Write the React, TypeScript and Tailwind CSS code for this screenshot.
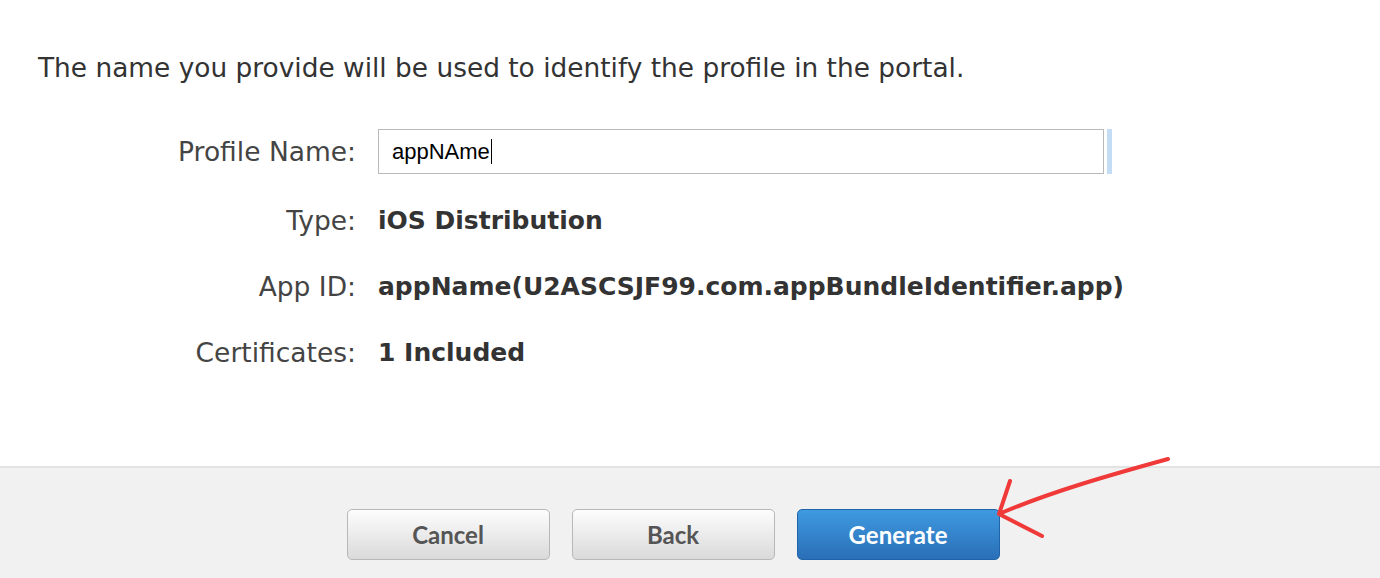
import React from 'react'

const rows = [
  { label: 'Type:', value: 'iOS Distribution' },
  { label: 'App ID:', value: 'appName(U2ASCSJF99.com.appBundleIdentifier.app)' },
  { label: 'Certificates:', value: '1 Included' },
]

function Button({ label, primary }: { label: string; primary?: boolean }) {
  return (
    <button
      className={
        primary
          ? 'w-[203px] h-[51px] rounded-[5px] border border-[#1f64a8] bg-gradient-to-b from-[#3f9ae0] to-[#2a6fb7] text-white text-[24px] font-bold'
          : 'w-[203px] h-[51px] rounded-[5px] border border-[#b8b8b8] bg-gradient-to-b from-[#fdfdfd] to-[#dadada] text-[#555] text-[24px] font-bold'
      }
      style={{ fontFamily: 'Lato, sans-serif' }}
    >
      {label}
    </button>
  )
}

export default function App() {
  return (
    <div className="w-[1380px] h-[578px] bg-white flex flex-col overflow-hidden relative" style={{ fontFamily: '"DejaVu Sans", sans-serif' }}>
      <div className="flex-1 flex flex-col">
        <p className="pl-[38px] pt-[52px] text-[26.4px] leading-[32px] text-[#333]">
          The name you provide will be used to identify the profile in the portal.
        </p>

        <div className="mt-[45px] grid grid-cols-[318px_auto] gap-x-[22px] pl-[38px] items-center">
          <div className="text-right text-[26.5px] text-[#444] h-[44px] leading-[44px]">Profile Name:</div>
          <div className="flex items-stretch gap-[3px]">
            <div className="w-[726px] h-[45px] border border-[#b9b9b9] bg-white flex items-center pl-[13px] text-[22px] text-black" style={{ fontFamily: '"Liberation Sans", sans-serif' }}>
              appNAme<span className="inline-block w-[1.5px] h-[25px] bg-black ml-[1px]" />
            </div>
            <div className="w-[5px] bg-[#c5dcf5]" />
          </div>
          <div className="col-span-2 h-[14px]" />
          {rows.map((r) => (
            <React.Fragment key={r.label}>
              <div className="text-right text-[26.5px] text-[#444] h-[66px] leading-[66px]">{r.label}</div>
              <div className="text-[25px] font-bold text-[#333] h-[66px] leading-[66px]">{r.value}</div>
            </React.Fragment>
          ))}
        </div>
      </div>

      <div className="h-[112px] shrink-0 border-t-2 border-[#e3e3e3] bg-[#f1f1f1] flex justify-center items-start pt-[41px] gap-[22px] pr-[34px]">
        <Button label="Cancel" />
        <Button label="Back" />
        <Button label="Generate" primary />
      </div>

      <svg className="absolute left-0 top-0 pointer-events-none" width="1380" height="578">
        <path
          d="M1168 459 C 1110 475, 1050 492, 999 514 M999 514 L1010 481 M999 514 L1042 536"
          stroke="#f03a3a"
          strokeWidth="4"
          strokeLinecap="round"
          fill="none"
        />
      </svg>
    </div>
  )
}
